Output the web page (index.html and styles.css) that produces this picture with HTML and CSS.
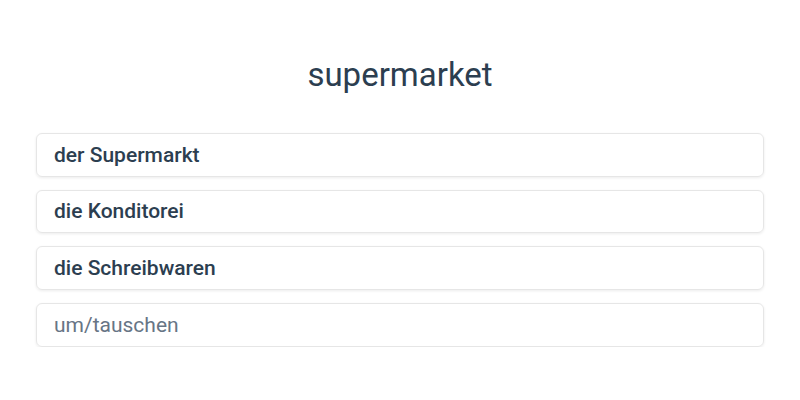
FILE: index.html
```html
<!DOCTYPE html>
<html>
<head>
<meta charset="utf-8">
<link rel="stylesheet" href="styles.css">
</head>
<body>
<div class="page">
  <h1 class="title">supermarket</h1>
  <div class="options">
    <div class="option">der Supermarkt</div>
    <div class="option">die Konditorei</div>
    <div class="option">die Schreibwaren</div>
    <div class="option muted">um/tauschen</div>
  </div>
</div>
</body>
</html>
```
FILE: styles.css
```css
html, body {
  margin: 0;
  padding: 0;
  background: #ffffff;
}
.page {
  padding: 56px 36px 0;
  font-family: Roboto, "Liberation Sans", sans-serif;
  color: #2c3e50;
}
.title {
  margin: 0 0 40px;
  text-align: center;
  font-size: 33px;
  font-weight: 400;
  line-height: 37px;
}
.options {
  display: flex;
  flex-direction: column;
  gap: 13px;
}
.option {
  height: 43.67px;
  box-sizing: border-box;
  display: flex;
  align-items: center;
  padding: 0 17px;
  border: 1px solid #e6e6e6;
  border-radius: 6px;
  box-shadow: 0 1px 3px rgba(0, 0, 0, 0.08);
  font-size: 21px;
  font-weight: 500;
}
.option.muted {
  font-weight: 400;
  color: #677585;
}
```
